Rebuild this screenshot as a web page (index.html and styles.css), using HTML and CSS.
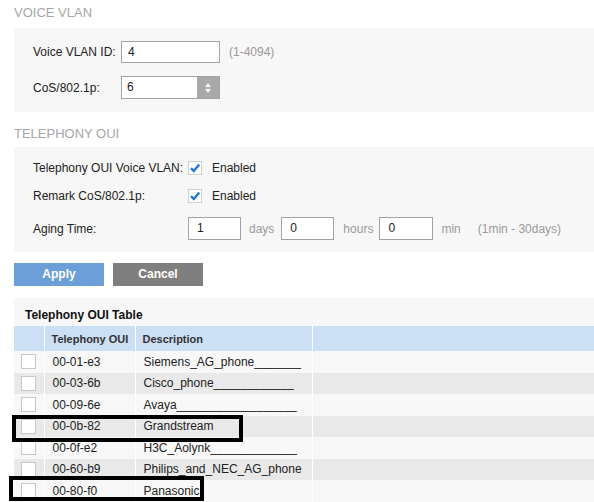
FILE: index.html
```html
<!DOCTYPE html>
<html>
<head>
<meta charset="utf-8">
<link rel="stylesheet" href="styles.css">
</head>
<body>
<h2 class="sec-title first">VOICE VLAN</h2>
<div class="panel panel-vlan">
  <div class="row row-a">
    <span class="label w88">Voice VLAN ID:</span>
    <span class="input w99">4</span>
    <span class="hint ml9">(1-4094)</span>
  </div>
  <div class="row row-b">
    <span class="label w88">CoS/802.1p:</span>
    <span class="select">
      <span class="select-val">6</span>
      <span class="spin">
        <svg width="8" height="12" viewBox="0 0 8 12"><path d="M4 1 L7 5 L1 5 Z" fill="#fff"/><path d="M4 11 L7 7 L1 7 Z" fill="#fff"/></svg>
      </span>
    </span>
  </div>
</div>

<h2 class="sec-title second">TELEPHONY OUI</h2>
<div class="panel panel-oui">
  <div class="row row-c">
    <span class="label w155">Telephony OUI Voice VLAN:</span>
    <span class="chk">
      <svg width="12" height="12" viewBox="0 0 12 12"><path d="M2 6.2 L4.8 9 L10.2 2.5" fill="none" stroke="#1f78d6" stroke-width="2.4"/></svg>
    </span>
    <span class="chk-text">Enabled</span>
  </div>
  <div class="row row-d">
    <span class="label w155">Remark CoS/802.1p:</span>
    <span class="chk">
      <svg width="12" height="12" viewBox="0 0 12 12"><path d="M2 6.2 L4.8 9 L10.2 2.5" fill="none" stroke="#1f78d6" stroke-width="2.4"/></svg>
    </span>
    <span class="chk-text">Enabled</span>
  </div>
  <div class="row row-e">
    <span class="label w155">Aging Time:</span>
    <span class="input w53">1</span>
    <span class="hint ml8">days</span>
    <span class="input w53 ml7">0</span>
    <span class="hint ml9">hours</span>
    <span class="input w54 ml6">0</span>
    <span class="hint ml8">min</span>
    <span class="hint ml17">(1min - 30days)</span>
  </div>
</div>

<div class="buttons">
  <span class="btn btn-apply">Apply</span>
  <span class="btn btn-cancel">Cancel</span>
</div>

<div class="panel panel-table">
  <div class="table-title">Telephony OUI Table</div>
  <table class="oui">
    <colgroup>
      <col class="c1"><col class="c2"><col class="c3"><col class="c4">
    </colgroup>
    <thead>
      <tr><th></th><th>Telephony OUI</th><th>Description</th><th></th></tr>
    </thead>
    <tbody>
      <tr><td><span class="box"></span></td><td>00-01-e3</td><td>Siemens_AG_phone_______</td><td></td></tr>
      <tr><td><span class="box"></span></td><td>00-03-6b</td><td>Cisco_phone____________</td><td></td></tr>
      <tr><td><span class="box"></span></td><td>00-09-6e</td><td>Avaya__________________</td><td></td></tr>
      <tr><td><span class="box"></span></td><td>00-0b-82</td><td>Grandstream</td><td></td></tr>
      <tr><td><span class="box"></span></td><td>00-0f-e2</td><td>H3C_Aolynk_____________</td><td></td></tr>
      <tr><td><span class="box"></span></td><td>00-60-b9</td><td>Philips_and_NEC_AG_phone</td><td></td></tr>
      <tr><td><span class="box"></span></td><td>00-80-f0</td><td>Panasonic</td><td></td></tr>
    </tbody>
  </table>
</div>

<div class="mark mark-1"></div>
<div class="mark mark-2"></div>
</body>
</html>
```

FILE: styles.css
```css
* { box-sizing: border-box; }
html, body { margin: 0; padding: 0; }
body {
  width: 594px;
  height: 502px;
  overflow: hidden;
  padding-left: 14px;
  background: #fff;
  font-family: "Liberation Sans", Arial, sans-serif;
  font-size: 12px;
  color: #222;
  position: relative;
}
.sec-title {
  margin: 0;
  font-weight: normal;
  font-size: 13px;
  line-height: 15px;
  color: #a6a6a6;
}
.sec-title.first { padding: 5px 0 8px 0; height: 28px; }
.sec-title.second { padding: 14px 0 6px 0; height: 35px; }

.panel { background: #f7f7f7; }
.panel-vlan { height: 84px; padding: 13px 0 0 19px; display: flex; flex-direction: column; }
.panel-oui { height: 105px; padding: 11px 0 0 19px; display: flex; flex-direction: column; }

.row { display: flex; align-items: center; }
.row-a { height: 22px; }
.row-b { height: 23px; margin-top: 13px; }
.row-c { height: 20px; }
.row-d { height: 20px; margin-top: 8px; }
.row-e { height: 23px; margin-top: 11px; }

.label { flex: none; }
.w88 { width: 88px; }
.w155 { width: 155px; }

.input {
  flex: none;
  height: 22px;
  border: 1px solid #a3a3a3;
  background: #fff;
  padding-left: 6px;
  line-height: 20px;
}
.row-e .input { height: 23px; line-height: 21px; padding-left: 8px; }
.w99 { width: 99px; }
.w53 { width: 53px; }
.w54 { width: 54px; }

.hint { color: #9a9a9a; flex: none; }
.ml6 { margin-left: 6px; }
.ml7 { margin-left: 7px; }
.ml8 { margin-left: 8px; }
.ml9 { margin-left: 9px; }
.ml10 { margin-left: 10px; }
.ml17 { margin-left: 17px; }

.select {
  display: flex;
  width: 99px;
  height: 23px;
  border: 1px solid #a3a3a3;
  background: #fff;
}
.select-val { flex: 1; padding-left: 5px; line-height: 21px; }
.spin {
  width: 22px;
  background: #a8a8a8;
  display: flex;
  align-items: center;
  justify-content: center;
}

.chk {
  width: 14px;
  height: 14px;
  border: 1px solid #d0d0d0;
  background: #fff;
  display: flex;
  align-items: center;
  justify-content: center;
}
.chk-text { margin-left: 10px; }

.buttons { display: flex; gap: 9px; margin-top: 11px; }
.btn {
  width: 90px;
  height: 23px;
  line-height: 23px;
  text-align: center;
  color: #fff;
  font-weight: bold;
}
.btn-apply { background: #6c9fd7; }
.btn-cancel { background: #7f7f7f; }

.panel-table { margin-top: 12px; height: 210px; }
.table-title {
  font-weight: bold;
  line-height: 14px;
  padding: 10px 0 4px 11px;
  height: 28px;
  color: #111;
}
table.oui {
  width: 580px;
  border-collapse: collapse;
  table-layout: fixed;
}
col.c1 { width: 30px; }
col.c2 { width: 91px; }
col.c3 { width: 177px; }
th, td {
  padding: 0 0 0 7px;
  border-right: 1px solid #fff;
  text-align: left;
  white-space: nowrap;
  overflow: hidden;
}
th:last-child, td:last-child { border-right: none; }
th {
  background: #cbdff5;
  height: 25px;
  font-size: 11px;
  font-weight: bold;
  color: #333;
}
td { height: 21.5px; padding-left: 8px; }
td:first-child { padding-left: 7px; }
tbody tr:nth-child(odd) td { background: #f8f8f8; }
tbody tr:nth-child(even) td { background: #e9e9e9; }
.box {
  display: block;
  width: 15px;
  height: 15px;
  border: 1px solid #c8c8c8;
  background: #fff;
}

.mark {
  position: absolute;
  border: 4px solid #000;
}
.mark-1 { left: 12px; top: 415px; width: 231px; height: 27px; }
.mark-2 { left: 9px; top: 476px; width: 195px; height: 25px; }
```
